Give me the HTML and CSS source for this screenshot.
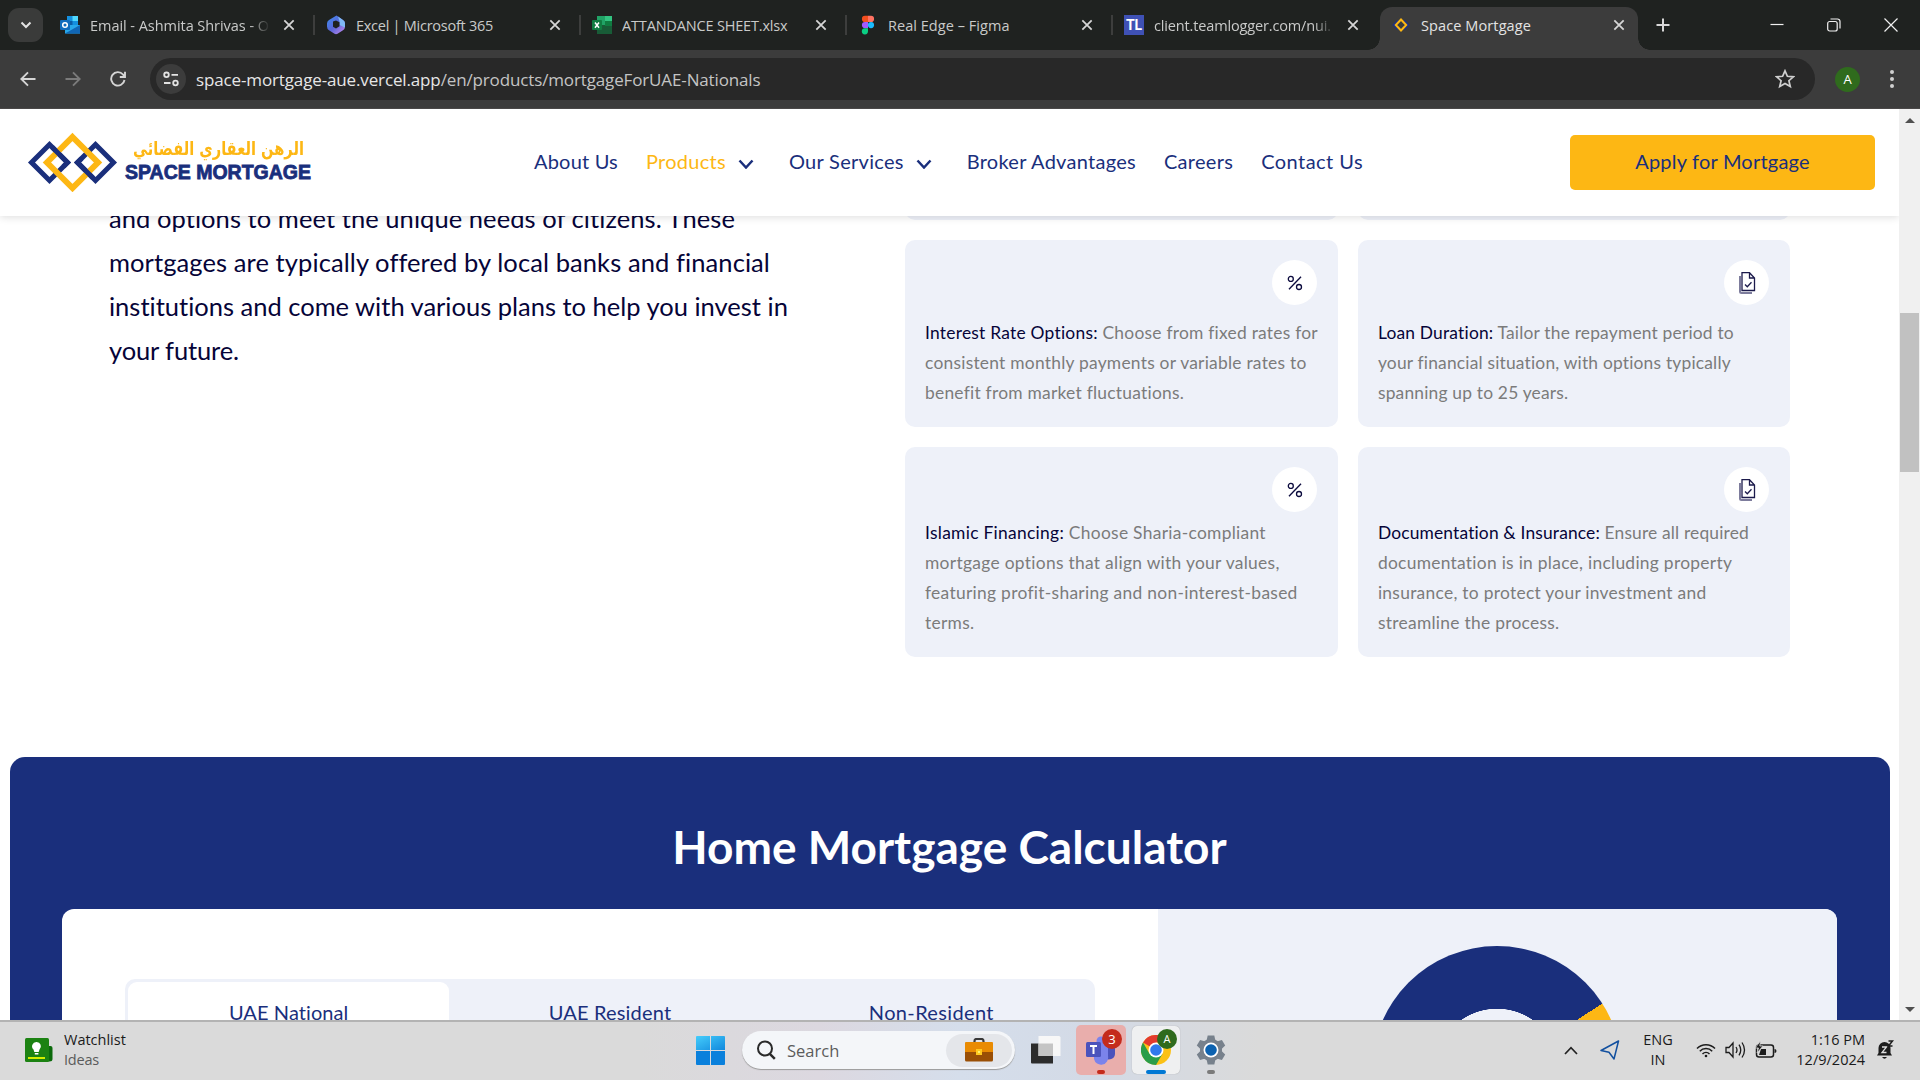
FILE: index.html
```html
<!DOCTYPE html>
<html lang="en">
<head>
<meta charset="utf-8">
<title>Space Mortgage</title>
<link rel="stylesheet" href="styles.css">
</head>
<body>
<div class="tabstrip">
  <button class="tab-search"><svg width="12" height="12" viewBox="0 0 12 12" fill="none" stroke="#e3e3e3" stroke-width="2"><path d="M1.5 3.5 6 8l4.500-4.500"/></svg></button>
  <div class="tab">
    <svg class="fav" viewBox="0 0 20 20"><path d="M7 1h11v9H7z" fill="#1490df"/><path d="M12.500 1H18v5h-5.500z" fill="#50d9ff"/><path d="M7 6h5.500v5H7z" fill="#0a5ea8"/><path d="m5 10 15 0v8.500H5z" fill="#28a8ea"/><path d="m5 18.500 15-8.500v8.500z" fill="#1066b5"/><rect y="5" width="10" height="10" rx="1" fill="#0f6cbd"/><circle cx="5" cy="10" r="2.300" fill="none" stroke="#fff" stroke-width="1.500"/></svg>
    <span class="tab-title fade title-mail">Email - Ashmita Shrivas - O</span>
    <svg class="x" viewBox="0 0 12 12"><path d="m2 2 8 8M10 2l-8 8"/></svg>
  </div>
  <div class="tab">
    <svg class="fav" viewBox="0 0 20 20"><defs><linearGradient id="m365" x1="0" y1="0" x2="1" y2="1"><stop offset="0" stop-color="#3b8ff0"/><stop offset=".5" stop-color="#5a66d8"/><stop offset="1" stop-color="#c98bf0"/></linearGradient></defs><path d="M10.500.5 3 5Q1 6.200 1 8.500v3Q1 14 3 15.200l5.500 3.600q1.500.8 3 0L17 15.200q2-1.200 2-3.700v-3Q19 6.200 17 5L12 1.500z" fill="url(#m365)"/><path d="M12 1.500 17 5q2 1.200 2 3.500v4L13.500 10V6.500Z" fill="#7fb9f5"/><path d="m7 6.500 3-1 3.500 1.700v4L10 13.500l-3-1.800z" fill="#1f2220"/></svg>
    <span class="tab-title title-excel">Excel | Microsoft 365</span>
    <svg class="x" viewBox="0 0 12 12"><path d="m2 2 8 8M10 2l-8 8"/></svg>
  </div>
  <div class="tab">
    <svg class="fav" viewBox="0 0 20 20"><path d="M5 1h15v18H5z" fill="#185c37"/><path d="M5 1h8v9H5z" fill="#21a366"/><path d="M13 1h7v5h-7z" fill="#33c481"/><path d="M13 6h7v5h-7z" fill="#107c41"/><rect y="5" width="10" height="10" rx="1" fill="#107c41"/><path d="m3 7.500 4 5.200M7 7.500l-4 5.200" stroke="#fff" stroke-width="1.500"/></svg>
    <span class="tab-title title-sheet">ATTANDANCE SHEET.xlsx</span>
    <svg class="x" viewBox="0 0 12 12"><path d="m2 2 8 8M10 2l-8 8"/></svg>
  </div>
  <div class="tab">
    <svg class="fav" viewBox="0 0 20 20"><path d="M10 .8H7a3.100 3.100 0 0 0 0 6.200h3z" fill="#f24e1e"/><path d="M10 .8h3a3.100 3.100 0 0 1 0 6.200h-3z" fill="#ff7262"/><path d="M10 7H7a3.100 3.100 0 0 0 0 6.200h3z" fill="#a259ff"/><circle cx="13" cy="10.100" r="3.100" fill="#1abcfe"/><path d="M10 13.200H7a3.100 3.100 0 1 0 3 3.100z" fill="#0acf83"/></svg>
    <span class="tab-title title-figma">Real Edge – Figma</span>
    <svg class="x" viewBox="0 0 12 12"><path d="m2 2 8 8M10 2l-8 8"/></svg>
  </div>
  <div class="tab nosep">
    <span class="fav tl">TL</span>
    <span class="tab-title fade title-client">client.teamlogger.com/nui.</span>
    <svg class="x" viewBox="0 0 12 12"><path d="m2 2 8 8M10 2l-8 8"/></svg>
  </div>
  <div class="tab active">
    <svg class="fav" viewBox="0 0 20 20" fill="none" stroke-width="2"><path d="m7 5.500-4.500 4.500L7 14.500M13 5.500l4.500 4.500-4.500 4.500" stroke="#1f3180"/><path d="m10 4.500 5.200 5.500-5.200 5.500L4.800 10z" stroke="#fdb714"/></svg>
    <span class="tab-title title-space">Space Mortgage</span>
    <svg class="x" viewBox="0 0 12 12"><path d="m2 2 8 8M10 2l-8 8"/></svg>
  </div>
  <svg class="newtab" width="14" height="14" viewBox="0 0 14 14" stroke="#d8d8d8" stroke-width="2"><path d="M7 .5v13M.5 7h13"/></svg>
  <div class="winbtns">
    <svg width="14" height="14" viewBox="0 0 14 14"><path d="M.5 6.500h13"/></svg>
    <svg width="14" height="14" viewBox="0 0 14 14"><rect x=".7" y="3.500" width="9.500" height="9.500" rx="2"/><path d="M3.500 1h7a2.500 2.500 0 0 1 2.500 2.500v7"/></svg>
    <svg width="14" height="14" viewBox="0 0 14 14"><path d="m.5.5 13 13M13.500.5l-13 13"/></svg>
  </div>
</div>

<div class="toolbar">
  <svg class="tb" viewBox="0 0 16 16"><path d="M15.500 8H1.500M8 1.300 1.300 8 8 14.700"/></svg>
  <svg class="tb dim" viewBox="0 0 16 16"><path d="M.5 8h14M8 1.300 14.700 8 8 14.700"/></svg>
  <svg class="tb" viewBox="0 0 16 16"><path d="M14.500 9A6.700 6.700 0 1 1 13 3.500L15 5.500M15 .8v5.200H9.800"/></svg>
  <div class="omnibox">
    <span class="site"><svg width="16" height="16" viewBox="0 0 16 16" fill="none" stroke="#e3e3e3" stroke-width="1.800"><circle cx="3.500" cy="3.800" r="2.300"/><path d="M8.500 3.800H15M1 12h6.500"/><circle cx="12.500" cy="12" r="2.300"/></svg></span>
    <span class="url">space-mortgage-aue.vercel.app<i>/en/products/mortgageForUAE-Nationals</i></span>
    <svg class="star" viewBox="0 0 20 20"><path d="m10 1.800 2.400 5.500 6 .5-4.500 3.900 1.400 5.900L10 14.500l-5.300 3.100 1.400-5.900L1.600 7.800l6-.5z"/></svg>
  </div>
  <span class="avatar">A</span>
  <span class="dots"><b></b><b></b><b></b></span>
</div>

<div class="viewport">
  <div class="page">
    <header class="site-header">
      <div class="logo">
        <svg width="92" height="60" viewBox="27 132 92 60" fill="none" stroke-width="5">
          <path d="M49.500 144.500 67.500 162.500l-18 18-18-18z" stroke="#1a2f7c"/>
          <path d="M95.500 144.500 113.500 162.500l-18 18-18-18z" stroke="#1a2f7c"/>
          <path d="M72.500 137 98 162.500 72.500 188 47 162.500z" stroke="#fdb714" stroke-width="6"/>
          <path d="m52 147 15.500 15.500-4 4M81.500 158.500l-4 4L93 178" stroke="#1a2f7c"/>
        </svg>
        <div class="logo-text">
          <span class="logo-ar" dir="rtl" lang="ar">الرهن العقاري الفضائي</span>
          <span class="logo-en">SPACE MORTGAGE</span>
        </div>
      </div>
      <nav class="nav">
        <a>About Us</a>
        <a class="on">Products<svg viewBox="0 0 16 10"><path d="m1.500 1.500 6.500 7 6.500-7"/></svg></a>
        <a>Our Services<svg viewBox="0 0 16 10"><path d="m1.500 1.500 6.500 7 6.500-7"/></svg></a>
        <a>Broker Advantages</a>
        <a>Careers</a>
        <a>Contact Us</a>
      </nav>
      <button class="apply">Apply for Mortgage</button>
    </header>

    <section class="intro">
      <p class="lead"><span>and options to meet the unique needs of citizens. These</span><span>mortgages are typically offered by local banks and financial</span><span>institutions and come with various plans to help you invest in</span><span>your future.</span></p>
      <div class="cards">
        <div class="card"></div>
        <div class="card"></div>
        <div class="card interest">
          <span class="badge"><svg class="pct" width="16" height="16" viewBox="0 0 16 16"><circle cx="3.800" cy="3.900" r="2.500"/><circle cx="12" cy="12" r="2.500"/><path d="M14 1.800 2 14.300"/></svg></span>
          <p><b>Interest Rate Options:</b> Choose from fixed rates for<br>consistent monthly payments or variable rates to<br>benefit from market fluctuations.</p>
        </div>
        <div class="card duration">
          <span class="badge"><svg class="doc" width="18" height="24" viewBox="0 0 18 24"><path class="shade" d="M2 5v15.500q0 1.500 1.500 1.500H14"/><path d="M4 1.700h7.500L16.500 7v12.500H4zM11.500 1.700V7h5M7 13.500l2.300 2.300 4.200-4.500"/></svg></span>
          <p><b>Loan Duration:</b> Tailor the repayment period to<br>your financial situation, with options typically<br>spanning up to 25 years.</p>
        </div>
        <div class="card islamic">
          <span class="badge"><svg class="pct" width="16" height="16" viewBox="0 0 16 16"><circle cx="3.800" cy="3.900" r="2.500"/><circle cx="12" cy="12" r="2.500"/><path d="M14 1.800 2 14.300"/></svg></span>
          <p><b>Islamic Financing:</b> Choose Sharia-compliant<br>mortgage options that align with your values,<br>featuring profit-sharing and non-interest-based<br>terms.</p>
        </div>
        <div class="card documents">
          <span class="badge"><svg class="doc" width="18" height="24" viewBox="0 0 18 24"><path class="shade" d="M2 5v15.500q0 1.500 1.500 1.500H14"/><path d="M4 1.700h7.500L16.500 7v12.500H4zM11.500 1.700V7h5M7 13.500l2.300 2.300 4.200-4.500"/></svg></span>
          <p><span class="first"><b>Documentation &amp; Insurance:</b> Ensure all required</span><br>documentation is in place, including property<br>insurance, to protect your investment and<br>streamline the process.</p>
        </div>
      </div>
    </section>

    <section class="calc">
      <h2>Home Mortgage Calculator</h2>
      <div class="panel">
        <div class="form">
          <div class="types">
            <span class="type sel">UAE National</span>
            <span class="type resident">UAE Resident</span>
            <span class="type non-resident">Non-Resident</span>
          </div>
        </div>
        <div class="chart"><div class="donut"></div></div>
      </div>
    </section>
  </div>
  <div class="scrollbar"><i class="up"></i><i class="thumb"></i><i class="down"></i></div>
</div>

<footer class="taskbar">
  <div class="widget">
    <svg width="28" height="25" viewBox="0 0 28 25"><path d="M22 8h3.500q2 0 2 2v11q0 2.500-3 2.500H22z" fill="#0b6a0b"/><rect width="24" height="24" rx="1.500" fill="#1c8212"/><path d="M11.500 4a4.300 4.300 0 0 1 3 7.500l-.8 2.500H9.300l-.8-2.500A4.300 4.300 0 0 1 11.500 4zM9.800 15h3.600v1.500H9.800z" fill="#fff"/><path d="M3 19h17v2H3z" fill="#d2ee00"/></svg>
    <div><strong>Watchlist</strong><small>Ideas</small></div>
  </div>
  <div class="apps">
    <svg class="start" width="29" height="29" viewBox="0 0 29 29"><defs><linearGradient id="win" x1="0" y1="0" x2="1" y2="1"><stop offset="0" stop-color="#45cdfb"/><stop offset="1" stop-color="#1188dd"/></linearGradient></defs><path d="M1 0h13v14H0V1q0-1 1-1zM15 0h13q1 0 1 1v13H15z" fill="url(#win)"/><path d="M0 15h14v14H1q-1 0-1-1zM15 15h14v13q0 1-1 1H15z" fill="#0a80dc"/></svg>
    <div class="search">
      <svg width="20" height="20" viewBox="0 0 20 20" fill="none" stroke="#2a2a2a" stroke-width="2"><circle cx="9" cy="8.500" r="7"/><path d="m13.800 13.800 5 5" stroke-width="2.500"/></svg>
      <span>Search</span>
      <div class="bag"><svg width="30" height="24" viewBox="0 0 30 24"><path d="M10.500 5V3q0-2 2-2h5q2 0 2 2v2" fill="none" stroke="#383838" stroke-width="2.200"/><path d="M1 5q0-1 1-1h26q1 0 1 1v9H1z" fill="#e98b02"/><path d="M1 14h28v8q0 1.500-1.500 1.500h-25Q1 23.500 1 22z" fill="#9a4f05"/><path d="M12 11h6v6h-6z" fill="#ffc91f"/><path d="M14 13h2v2h-2z" fill="#fff36b"/></svg></div>
    </div>
    <svg class="tv" width="31" height="30" viewBox="0 0 31 30"><path d="M1 8.500h22v20H2q-1 0-1-1z" fill="#2c2c2c"/><path d="M8.500 1H29q1.500 0 1.500 1.500V21h-22z" fill="#f7f7f7"/><path d="M8.500 8.500H23V21H8.500z" fill="#c4c4c4"/></svg>
    <div class="app teams">
      <svg width="32" height="30" viewBox="0 0 32 30"><circle cx="16" cy="6" r="4.500" fill="#7b83eb"/><path d="M20 10h10v9a6 6 0 0 1-10 4z" fill="#4b53bc"/><path d="M9 10h14v11a7 7 0 0 1-14 3z" fill="#7b83eb"/><rect x="1" y="7" width="15" height="15" rx="1.500" fill="#4b53bc"/><path d="M5 11h7M8.500 11v8" stroke="#fff" stroke-width="2"/></svg>
      <b class="count">3</b><i></i>
    </div>
    <div class="app chrome">
      <svg width="30" height="30" viewBox="0 0 30 30"><circle cx="15" cy="15" r="15" fill="#fbc116"/><path d="M15 15 2 7.500A15 15 0 0 1 28 7.500H15z" fill="#e33b2e"/><path d="M2 7.500A15 15 0 0 0 15 30l6.500-11.200L8.500 18.700z" fill="#2a9d49"/><circle cx="15" cy="15" r="7.500" fill="#fff"/><circle cx="15" cy="15" r="5.800" fill="#3079ec"/></svg>
      <b class="count green">A</b><i></i>
    </div>
    <div class="app gear">
      <svg width="30" height="30" viewBox="-15 -15 30 30"><g fill="#77818c"><circle r="11"/><path id="tooth" d="M-4.500-9-3.300-14.500H3.300L4.500-9V9L3.300 14.500H-3.300L-4.500 9z"/><use href="#tooth" transform="rotate(60)"/><use href="#tooth" transform="rotate(120)"/></g><circle r="7.500" fill="#fff"/><circle r="5.800" fill="#0c62b0"/></svg><i></i>
    </div>
  </div>
  <div class="tray">
    <svg class="up" width="14" height="9" viewBox="0 0 14 9" fill="none" stroke="#222" stroke-width="1.700"><path d="m1 8 6-6.300L13 8"/></svg>
    <svg class="plane" width="20" height="20" viewBox="0 0 20 20" fill="none" stroke="#12509f" stroke-width="1.500" stroke-linejoin="round"><path d="M18.500 1 1 10.500l8 1.800L14 19z"/></svg>
    <div class="lang"><span>ENG</span><span>IN</span></div>
    <svg class="wifi" width="20" height="16" viewBox="0 0 20 16" fill="none" stroke="#1c1c1c" stroke-width="1.500"><path d="M1 6.500a12.500 12.500 0 0 1 18 0M3.800 9.300a8.500 8.500 0 0 1 12.400 0M6.500 12a5 5 0 0 1 7 0"/><circle cx="10" cy="14" r="1.300" fill="#1c1c1c" stroke="none"/></svg>
    <svg class="vol" width="21" height="18" viewBox="0 0 21 18" fill="none" stroke="#1c1c1c" stroke-width="1.300"><path d="M1 6.500h3L8 2v14l-4-4.500H1zM11 6q2 3 0 6M14 3.700q3.500 5.300 0 10.600M17 1.500q5 7.500 0 15"/></svg>
    <svg class="bat" width="22" height="18" viewBox="0 0 22 18"><rect x="1.500" y="4" width="17" height="12" rx="2.500" fill="none" stroke="#1c1c1c" stroke-width="1.500"/><path d="M19.500 8q2 0 2 2t-2 2zM4 14l2-6h5v6z" fill="#1c1c1c"/><path d="M5.500 0 0 7h3.500L2 12l6-7H4.800z" fill="#1c1c1c" stroke="#d9d9d9" stroke-width=".8"/></svg>
    <div class="clock"><span>1:16 PM</span><span>12/9/2024</span></div>
    <svg class="bell" width="18" height="20" viewBox="0 0 18 20"><path d="M1 15.500 2.500 13V8a6 6 0 0 1 12 0v5l1.500 2.500zM6 17h5q-2.500 3.500-5 0z" fill="#1c1c1c"/><path d="M6 7h4.500L6 12.500h4.500" fill="none" stroke="#ddd" stroke-width="1.300"/><path d="M12.500 1h4l-4 5h4" fill="none" stroke="#1c1c1c" stroke-width="1.500"/></svg>
  </div>
</footer>
</body>
</html>
```
FILE: styles.css
```css
* { box-sizing: border-box; }
body { margin: 0; width: 1920px; height: 1080px; overflow: hidden; display: flex; flex-direction: column; font-family: "Open Sans", "Noto Sans", sans-serif; font-variant-ligatures: none; background: #fff; }
svg { display: block; flex: none; }
button { border: 0; padding: 0; font: inherit; }

/* browser tabs */
.tabstrip { height: 50px; flex: none; background: #1f2220; display: flex; align-items: center; padding-left: 8px; }
.tab-search { width: 35px; height: 34px; border-radius: 11px; background: #3a3b3a; display: grid; place-items: center; margin-right: 7px; }
.tab { width: 266px; height: 43px; margin-top: 7px; padding: 0 13px 7px 10px; display: flex; align-items: center; position: relative; color: #c9cac9; font-size: 14.500px; }
.tab::after { content: ""; position: absolute; right: 1px; top: 8px; width: 2px; height: 20px; background: #3d3e3d; }
.tab.nosep::after { display: none; }
.fav { width: 20px; height: 20px; flex: none; margin-right: 10px; }
.tab-title { flex: 1; white-space: nowrap; overflow: hidden; }
.title-mail { letter-spacing: -.046px; }
.title-excel { letter-spacing: -.263px; }
.title-sheet { letter-spacing: -.171px; }
.title-figma { letter-spacing: .04px; }
.title-client { letter-spacing: -.15px; }
.title-space { letter-spacing: .104px; }
.fade { -webkit-mask-image: linear-gradient(90deg, #000 89%, transparent 100%); mask-image: linear-gradient(90deg, #000 89%, transparent 100%); }
.x { width: 14px; height: 14px; margin: 0 7px 0 12px; stroke: #d6d6d6; stroke-width: 1.500; }
.tl { background: #3f51b5; color: #fff; font: 700 14px/20px Roboto, sans-serif; text-align: center; }
.tab.active { width: 258px; padding: 0 5px 7px 11px; background: #3c3c3c; border-radius: 12px 12px 0 0; color: #e3e3e3; }
.tab.active::before, .tab.active::after { content: ""; position: absolute; top: auto; bottom: 0; width: 12px; height: 12px; }
.tab.active::before { left: -12px; background: radial-gradient(circle at 0 0, transparent 11.500px, #3c3c3c 12px); }
.tab.active::after { right: -12px; background: radial-gradient(circle at 100% 0, transparent 11.500px, #3c3c3c 12px); }
.newtab { margin-left: 18px; }
.winbtns { margin: 0 22px 0 auto; display: flex; gap: 43px; fill: none; stroke: #f0f0f0; stroke-width: 1.200; }

/* address bar */
.toolbar { height: 59px; flex: none; background: #3c3c3c; border-bottom: 1px solid #4a4848; display: flex; align-items: center; padding: 0 24px 0 20px; }
.tb { width: 16px; height: 16px; margin-right: 29px; fill: none; stroke: #d5d5d5; stroke-width: 1.900; }
.tb.dim { stroke: #7b7b7b; }
.omnibox { width: 1665px; height: 42px; margin-left: -5px; border-radius: 21px; background: #282828; display: flex; align-items: center; padding: 0 20px 0 6px; }
.site { width: 30px; height: 30px; border-radius: 50%; background: #3c3c3c; display: grid; place-items: center; }
.url { flex: 1; margin-left: 10px; font-size: 17px; letter-spacing: -.136px; color: #e6e6e6; white-space: nowrap; }
.url i { font-style: normal; color: #c4c4c4; }
.star { width: 20px; height: 20px; fill: none; stroke: #cfcfcf; stroke-width: 1.700; }
.avatar { width: 25px; height: 25px; margin-left: 20px; border-radius: 50%; background: #2f6b1d; color: #fff; font-size: 13px; line-height: 25px; text-align: center; }
.dots { margin: 0 0 0 auto; width: 8px; display: grid; justify-items: center; gap: 3px; }
.dots b { width: 4px; height: 4px; border-radius: 50%; background: #d0d0d0; }

/* web page */
.viewport { flex: 1; min-height: 0; display: flex; }
.page { width: 1899px; overflow: hidden; font-family: Lato, sans-serif; }
.site-header { position: relative; z-index: 1; height: 107px; background: #fff; box-shadow: 0 1px 8px rgba(0,0,0,.14); display: flex; align-items: center; padding: 0 24px 0 27px; }
.logo { width: 507px; padding-bottom: 2px; display: flex; align-items: center; }
.logo-text { margin-left: 6px; padding-bottom: 6px; display: flex; flex-direction: column; align-items: flex-start; }
.logo-ar { width: 222px; margin-left: 8px; font: 700 19px/26px "DejaVu Sans", sans-serif; color: #fdb714; transform: scaleX(.77); transform-origin: left; white-space: nowrap; }
.logo-en { font: 700 19.500px/22px "Liberation Sans", sans-serif; color: #1a2f7c; -webkit-text-stroke: .8px #1a2f7c; white-space: nowrap; }
.nav { display: flex; padding-bottom: 3px; font-size: 20px; letter-spacing: .28px; color: #1a2f7c; white-space: nowrap; }
.nav a { display: flex; align-items: center; margin-right: 28px; }
.nav a:first-child { letter-spacing: .2px; }
.nav a:last-child { letter-spacing: .46px; }
.nav a.on { color: #fdb714; }
.nav svg { width: 16px; height: 10px; margin: 6px 7px 0 12px; fill: none; stroke: #1a2f7c; stroke-width: 2.500; }
.apply { width: 305px; height: 55px; margin-left: auto; padding-bottom: 3px; border-radius: 5px; background: #fdb714; color: #1a2f7c; font-size: 20px; letter-spacing: .207px; }

.intro { height: 541px; display: flex; justify-content: space-between; padding: 0 109px; }
.lead { margin: -20px 0 0; font-size: 25.500px; line-height: 44px; color: #060438; white-space: nowrap; }
.lead span { display: block; }
.lead span:nth-child(1) { letter-spacing: .066px; }
.lead span:nth-child(2) { letter-spacing: .091px; }
.lead span:nth-child(4) { letter-spacing: -.125px; }
.cards { width: 885px; margin-top: -36px; display: grid; grid-template: 40px 187px 210px / 1fr 1fr; gap: 20px; align-content: start; }
.card { background: #eef1f9; border-radius: 10px; padding: 20px 20px 19px; display: flex; flex-direction: column; justify-content: space-between; }
.badge { align-self: flex-end; width: 45px; height: 45px; margin-right: 1px; border-radius: 50%; background: #fff; display: grid; place-items: center; }
.pct { margin-left: 1px; fill: none; stroke: #0b0a3d; stroke-width: 1.300; }
.doc { fill: none; stroke: #1b1a4b; stroke-width: 1.300; }
.doc .shade { stroke: #7d7c9c; stroke-width: 2; }
.card p { margin: 0; font-size: 17.400px; line-height: 30px; color: #7b7b7b; white-space: nowrap; }
.card b { font-weight: 400; color: #060438; }
.interest p { letter-spacing: .243px; }
.duration p { letter-spacing: .19px; }
.islamic p { letter-spacing: .297px; }
.documents p { letter-spacing: .278px; }
.documents .first { letter-spacing: .158px; }

.calc { height: 400px; margin: 0 9px 0 10px; background: #1a2f7c; border-radius: 15px; padding: 60px 53px 0 52px; }
.calc h2 { margin: 0; height: 92px; line-height: 60px; font-size: 46px; font-weight: 700; color: #fff; text-align: center; }
.panel { height: 400px; border-radius: 12px; overflow: hidden; display: flex; background: #fff; }
.form { width: 1096px; padding: 70px 63px 0; }
.types { height: 70px; background: #eef1f9; border-radius: 10px; padding: 3px; display: grid; grid-template-columns: 1fr 1fr 1fr; font-size: 20px; line-height: 60px; color: #1a2f7c; text-align: center; }
.type.sel { background: #fff; border-radius: 9px; letter-spacing: .083px; }
.resident { letter-spacing: .171px; }
.non-resident { letter-spacing: .354px; }
.chart { flex: 1; background: #eef1f9; padding: 37px 0 0 214px; }
.donut { width: 250px; height: 250px; border-radius: 50%; background: radial-gradient(#eef1f9 62px, transparent 62.500px), conic-gradient(#1a2f7c 57.400deg, #fdb714 57.400deg 180deg, #1a2f7c 180deg); }

.scrollbar { width: 21px; background: #f0f0f0; display: flex; flex-direction: column; align-items: center; padding: 9px 0 8px; }
.scrollbar .up { border: 5px solid transparent; border-top: 0; border-bottom: 5px solid #505050; }
.scrollbar .down { margin-top: auto; border: 5px solid transparent; border-bottom: 0; border-top: 5px solid #505050; }
.thumb { width: 19px; height: 159px; margin-top: 190px; background: #c1c1c1; }

/* desktop taskbar */
.taskbar { height: 60px; flex: none; border-top: 2px solid #b3b3b3; padding-bottom: 2px; background: linear-gradient(90deg, #dadada 640px, #dcd8e0 820px, #d5deeb 960px, #d3dae6 1090px, #dadada 1260px); display: flex; align-items: center; color: #1b1b1b; font-size: 14.500px; }
.widget { width: 696px; padding-left: 25px; display: flex; align-items: center; gap: 11px; line-height: 20px; }
.widget strong, .widget small { display: block; font-size: 14.500px; font-weight: 400; }
.widget small { color: #5a5a5a; letter-spacing: -.2px; }
.apps { display: flex; align-items: center; }
.search { width: 273px; height: 38px; margin: 0 15px 0 17px; border-radius: 19px; background: #f4f6f9; box-shadow: 0 1px 1px #9a9a9a; display: flex; align-items: center; padding: 0 3px 0 14px; gap: 11px; color: #5c5c5c; font-size: 16.500px; }
.bag { width: 66px; height: 33px; margin-left: auto; border-radius: 17px; background: #e4e6ea; display: grid; place-items: center; }
.app { height: 50px; border-radius: 5px; display: grid; place-items: center; position: relative; }
.app i { position: absolute; bottom: 1px; left: 50%; width: 8px; height: 4px; margin-left: -4px; border-radius: 2px; background: #7b7b7b; }
.teams { width: 50px; margin: 0 6px 0 15px; background: #e9aeac; }
.teams i { background: #c42b1c; }
.chrome { width: 48px; height: 48px; background: #eff0f1; box-shadow: 0 0 1px #999; }
.chrome i { width: 20px; margin-left: -10px; background: #0078d4; bottom: 0; }
.gear { width: 30px; margin-left: 16px; }
.count { position: absolute; right: 4px; top: 4px; width: 20px; height: 20px; border-radius: 50%; background: #c42b1c; color: #fff; font-size: 13px; font-weight: 400; line-height: 20px; text-align: center; }
.count.green { background: #2f6b1d; right: 3px; top: 3px; font-size: 11px; }
.tray { margin-left: auto; display: flex; align-items: center; padding-right: 26px; line-height: 20px; }
.tray .plane { margin: 0 20px 0 22px; }
.lang { width: 36px; display: grid; justify-items: center; margin-right: 20px; }
.vol { margin: 0 9px 0 9px; }
.clock { width: 88px; display: grid; justify-items: end; margin-right: 11px; }
```
